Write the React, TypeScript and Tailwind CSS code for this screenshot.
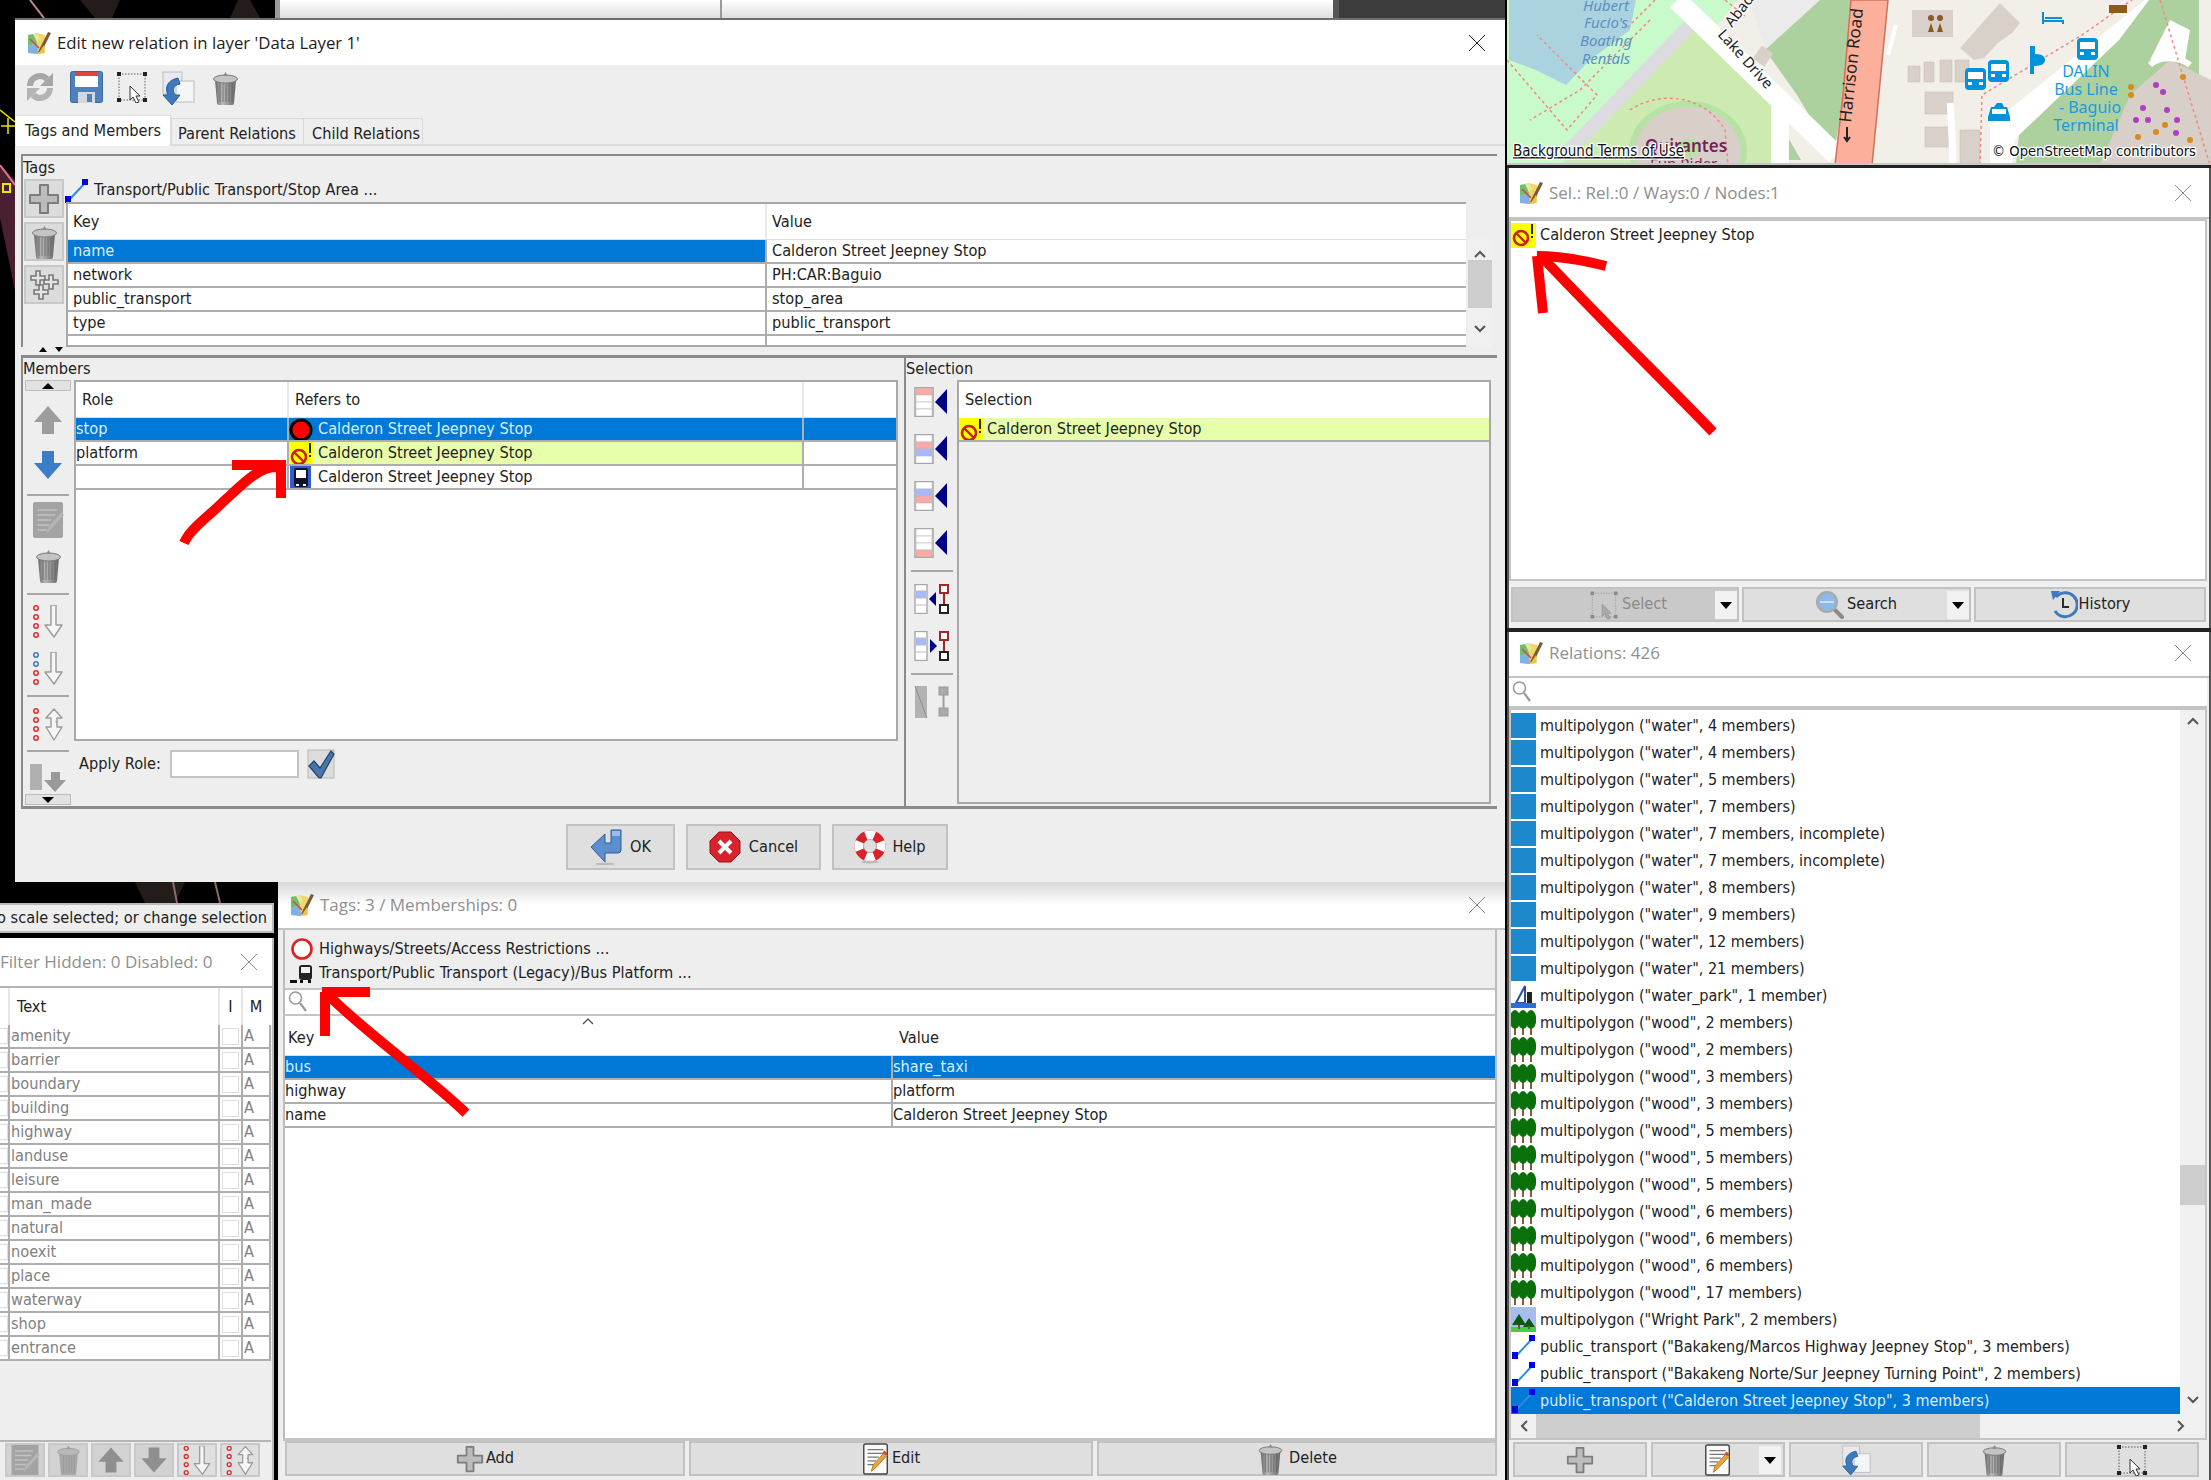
import React from "react";

const Sv = ({ w = 24, h = 24, children, vb }: { w?: number; h?: number; children: React.ReactNode; vb?: string }) => (
  <svg width={w} height={h} viewBox={vb ?? `0 0 ${w} ${h}`} className="shrink-0 block">{children}</svg>
);

const Logo = () => (
  <Sv w={25} h={24}>
    <path d="M1 4l9-2 8 2v18l-8 1-9-1z" fill="#f3d66a" />
    <path d="M1 4l6-1 3 9-9 3z" fill="#6fbf73" />
    <path d="M1 15l9-3 1 11-10-1z" fill="#7fb0e6" />
    <path d="M6 3l4-1 3 6-3 3z" fill="#e8e8a0" />
    <path d="M3 8l9 9" stroke="#d0503a" strokeWidth="1.6" />
    <path d="M11 21L21 1l3 1L14 22z" fill="#7a5a32" />
    <path d="M17 14v8l-6 1z" fill="#efc04e" />
  </Sv>
);
const Refresh = () => (
  <Sv w={30} h={32}>
    <path d="M5 15a10 10 0 0 1 17-7" fill="none" stroke="#a6a6a6" strokeWidth="6" />
    <path d="M28 2v13H15z" fill="#a6a6a6" />
    <path d="M25 17a10 10 0 0 1-17 7" fill="none" stroke="#b4b4b4" strokeWidth="6" />
    <path d="M2 30V17h13z" fill="#b4b4b4" />
  </Sv>
);
const Floppy = () => (
  <Sv w={33} h={32}>
    <rect x="0.5" y="0.5" width="32" height="31" rx="2" fill="#4f81bd" stroke="#3a669c" />
    <rect x="5" y="1" width="23" height="15" fill="#fff" />
    <rect x="5" y="1" width="23" height="4" fill="#d9483b" />
    <rect x="8" y="21" width="17" height="11" fill="#d4d8de" />
    <rect x="17" y="23" width="5" height="8" fill="#4f81bd" />
  </Sv>
);
const SelectIco = ({ w = 32, gray = false }: { w?: number; gray?: boolean }) => {
  const c = gray ? "#8a8a8a" : "#222";
  return (
    <Sv w={w} h={32} vb="0 0 32 32">
      <rect x="3" y="3" width="26" height="26" fill="none" stroke={c} strokeWidth="1" strokeDasharray="1.5 1.5" opacity="0.7" />
      <rect x="1" y="1" width="4" height="4" fill={c} />
      <rect x="27" y="1" width="4" height="4" fill={c} />
      <rect x="1" y="27" width="4" height="4" fill={c} />
      <rect x="27" y="27" width="4" height="4" fill={c} />
      <path d="M14 15v14l3-3 3 6 3-1-3-6h4z" fill={gray ? "#aaa" : "#fff"} stroke={gray ? "#999" : "#333"} />
    </Sv>
  );
};
const CopyArrow = ({ s = 34 }: { s?: number }) => (
  <Sv w={s} h={s} vb="0 0 34 34">
    <rect x="2" y="1" width="19" height="22" fill="#e8eaee" stroke="#b9bcc2" />
    <rect x="15" y="10" width="18" height="21" fill="#f4f5f6" stroke="#b9bcc2" />
    <path d="M17 7C7 9 3 16 7 24L2 24L11 34L19 24L14 24C11 19 12 14 19 13Z" fill="#3d79bd" stroke="#2c5e9a" />
  </Sv>
);
const Trash = ({ w = 27, h = 34, gray = false }: { w?: number; h?: number; gray?: boolean }) => (
  <Sv w={w} h={h} vb="0 0 27 34">
    <defs>
      <linearGradient id="trashg" x1="0" x2="1" y1="0" y2="0">
        <stop offset="0" stopColor="#666" />
        <stop offset="0.35" stopColor="#b8b8b8" />
        <stop offset="1" stopColor="#666" />
      </linearGradient>
    </defs>
    <path d="M3 9h21l-2 23a2 2 0 0 1-2 2H7a2 2 0 0 1-2-2z" fill={gray ? "#a8a8a8" : "url(#trashg)"} />
    {[8, 11, 14, 17, 20].map((x) => (
      <path key={x} d={`M${x} 12v19`} stroke={gray ? "#939393" : "#5e5e5e"} strokeWidth="1" opacity="0.7" />
    ))}
    <ellipse cx="13.5" cy="8" rx="12" ry="4" fill={gray ? "#b8b8b8" : "#c4c4c4"} stroke={gray ? "#a0a0a0" : "#7a7a7a"} />
    <path d="M11 5l2.5-4 2.5 4z" fill={gray ? "#a0a0a0" : "#8e8e8e"} />
  </Sv>
);
const Plus = ({ s = 32 }: { s?: number }) => (
  <Sv w={s} h={s} vb="0 0 32 32">
    <path d="M12 2h8v10h10v8H20v10h-8V20H2v-8h10z" fill="#bcbcbc" stroke="#7c7c7c" strokeWidth="2" strokeLinejoin="round" />
  </Sv>
);
const MultiPlus = () => (
  <Sv w={32} h={32}>
    {[[10, 9], [23, 13], [13, 23]].map(([x, y], i) => (
      <path key={i} d={`M${x - 2} ${y - 7}h4v5h5v4h-5v5h-4v-5h-5v-4h5z`} fill="#e5e5e5" stroke="#777" strokeWidth="1.6" />
    ))}
  </Sv>
);
const RelIco = () => (
  <Sv w={24} h={24}>
    <path d="M4 21L20 4" stroke="#2b8de0" strokeWidth="2" />
    <rect x="0" y="17" width="6" height="7" fill="#0000e0" />
    <rect x="17" y="0" width="6" height="6" fill="#0000e0" />
  </Sv>
);
const NoEntry = () => (
  <Sv w={25} h={25}>
    <rect width="25" height="25" fill="#ffff00" />
    <circle cx="10" cy="15" r="7" fill="none" stroke="#cc1f00" strokeWidth="2.6" />
    <path d="M5 10l10 10" stroke="#cc1f00" strokeWidth="2.4" />
    <rect x="20" y="1" width="2" height="10" fill="#222" />
    <rect x="20" y="13" width="2" height="2" fill="#222" />
  </Sv>
);
const RedCircle = () => (
  <Sv w={24} h={24}>
    <circle cx="12" cy="12" r="10" fill="#ff0000" stroke="#000" strokeWidth="3" />
  </Sv>
);
const BusIco = () => (
  <Sv w={24} h={24}>
    <rect x="1" y="0" width="21" height="24" fill="#3358d8" />
    <rect x="5" y="2" width="14" height="19" rx="2" fill="#101428" />
    <rect x="7" y="4" width="10" height="8" fill="#fff" />
    <rect x="7" y="18" width="3" height="2" fill="#fff" />
    <rect x="14" y="18" width="3" height="2" fill="#fff" />
  </Sv>
);
const ArrowV = ({ up = false, color }: { up?: boolean; color: string }) => (
  <Sv w={32} h={30}>
    <path d={up ? "M16 1L30 17H22V29H10V17H2z" : "M10 1H22V13H30L16 29L2 13H10z"} fill={color} />
  </Sv>
);
const NoteGray = () => (
  <Sv w={32} h={36}>
    <rect x="1" y="0" width="30" height="36" rx="2" fill="#a3a3a3" />
    <path d="M5 8h20M5 13h18M5 18h14M5 23h12M5 28h10" stroke="#c2c2c2" strokeWidth="1.5" />
    <path d="M14 32l3-8 13-14 2 3-13 14z" fill="#b5b5b5" />
  </Sv>
);
const Note = ({ h = 32 }: { h?: number }) => (
  <Sv w={28} h={h} vb="0 0 28 34">
    <rect x="1" y="1" width="25" height="32" rx="2" fill="#fafafa" stroke="#444" strokeWidth="1.5" />
    <path d="M5 7h17M5 11h17M5 15h12M5 19h9M5 23h7" stroke="#777" strokeWidth="1.4" />
    <path d="M9 30l2-7 12-13 3 3-12 13z" fill="#e8a33a" stroke="#a36a1a" strokeWidth="0.8" />
    <path d="M21 10l2-2 3 3-2 2z" fill="#d04a3a" />
  </Sv>
);
const DotsArrow = ({ blue = false, both = false, s = 33 }: { blue?: boolean; both?: boolean; s?: number }) => (
  <Sv w={32} h={s} vb="0 0 32 33">
    {[3, 12, 21, 30].map((y, i) => (
      <circle key={y} cx="4" cy={y} r="2.2" fill="none" stroke={blue && i < 2 ? "#3d79bd" : "#e02b2b"} strokeWidth="1.5" />
    ))}
    {both ? (
      <path d="M22 1l8 9h-5v4h-1 1v5h5l-8 13-8-13h5v-5-4h-5z" fill="#f6f6f6" stroke="#9a9a9a" strokeWidth="1.4" strokeLinejoin="round" />
    ) : (
      <path d="M19 0h5v20h6l-8 12-9-12h6z" fill="#f6f6f6" stroke="#9a9a9a" strokeWidth="1.4" strokeLinejoin="round" />
    )}
  </Sv>
);
const SortDown = () => (
  <Sv w={36} h={28}>
    <rect x="0" y="0" width="12" height="26" fill="#b0b0b0" />
    <path d="M21 8h9v8h6L25 28 14 16h7z" fill="#999" />
  </Sv>
);
const TableArrow = ({ hi }: { hi: number[] }) => (
  <Sv w={36} h={30}>
    <rect x="1" y="0.5" width="18" height="29" fill="#fff" stroke="#a0a0a0" strokeWidth="1.4" />
    {[0, 1, 2, 3].map((i) => (
      <rect key={i} x="2" y={1 + i * 7} width="16" height="7" fill={hi[0] === i ? "#ffa8a8" : hi[1] === i ? "#a8b8ff" : "#fff"} stroke="#b8b8b8" strokeWidth="0.6" />
    ))}
    <path d="M33 2v25L21 15z" fill="#000086" />
  </Sv>
);
const TableNode = ({ right = false }: { right?: boolean }) => (
  <Sv w={36} h={30}>
    <rect x="1" y="0.5" width="12" height="29" fill="#fff" stroke="#a8a8a8" strokeWidth="1.4" />
    <rect x="2" y="7" width="10" height="7" fill="#a8b8ff" />
    <path d="M2 7h10M2 14h10M2 21h10" stroke="#bbb" />
    <path d={right ? "M16 8v14l7-7z" : "M22 8v14l-7-7z"} fill="#000086" />
    <rect x="26" y="1" width="8" height="8" fill="#fff" stroke="#a02828" strokeWidth="2" />
    <path d="M30 9v12" stroke="#a02828" strokeWidth="2" />
    <rect x="26" y="21" width="8" height="8" fill="#fff" stroke="#222" strokeWidth="2" />
  </Sv>
);
const TableOff = () => (
  <Sv w={36} h={32}>
    <path d="M1 0h12v32H1z" fill="#b2b2b2" />
    <path d="M1 0l12 32" stroke="#8f8f8f" />
    <rect x="25" y="1" width="9" height="8" fill="#aaa" stroke="#999" />
    <path d="M29.5 9v13" stroke="#a0a0a0" strokeWidth="2" />
    <rect x="25" y="22" width="9" height="8" fill="#aaa" stroke="#999" />
  </Sv>
);
const Check = () => (
  <Sv w={28} h={30}>
    <rect x="1" y="1" width="26" height="28" fill="#dcdcdc" stroke="#b8b8b8" />
    <path d="M2 17l5-5 6 7L24 2l3 3-13 24h-2z" fill="#4a75a8" stroke="#23426e" strokeWidth="1.2" />
  </Sv>
);
const OkIco = () => (
  <Sv w={34} h={36}>
    <path d="M31 1v20a3 3 0 0 1-3 3H15v9L1 18 15 5v9h6V1z" fill="#5b8fd0" stroke="#2f5f9e" />
    <rect x="22" y="2" width="8" height="5" fill="#9bbde6" />
    <ellipse cx="15" cy="35" rx="10" ry="1.5" fill="#bbb" />
  </Sv>
);
const CancelIco = () => (
  <Sv w={32} h={32}>
    <path d="M10 1h12l9 9v12l-9 9H10l-9-9V10z" fill="#d8232a" stroke="#9a1115" />
    <path d="M10 10l12 12M22 10L10 22" stroke="#fff" strokeWidth="4" />
  </Sv>
);
const HelpIco = () => (
  <Sv w={32} h={34}>
    <circle cx="16" cy="16" r="11" fill="none" stroke="#d8232a" strokeWidth="9" />
    <circle cx="16" cy="16" r="11" fill="none" stroke="#ffffff" strokeWidth="9" strokeDasharray="8.6 8.6" strokeDashoffset="4.3" />
    <circle cx="16" cy="16" r="6.5" fill="none" stroke="#9a9a9a" strokeWidth="0.6" />
    <ellipse cx="16" cy="32" rx="9" ry="1.5" fill="#bbb" />
  </Sv>
);
const SearchIco = () => (
  <Sv w={28} h={28}>
    <path d="M17 17l9 9" stroke="#8a8a8a" strokeWidth="4" strokeLinecap="round" />
    <circle cx="11" cy="11" r="10" fill="#8db8e8" stroke="#a8a8a8" strokeWidth="2" />
    <path d="M4 11h14" stroke="#c9e0f8" strokeWidth="2" />
  </Sv>
);
const Glass = () => (
  <Sv w={20} h={24}>
    <circle cx="7.5" cy="8" r="6" fill="none" stroke="#9a9a9a" strokeWidth="1.6" />
    <path d="M12 13l6 8" stroke="#9a9a9a" strokeWidth="2.2" />
  </Sv>
);
const HistoryIco = () => (
  <Sv w={28} h={30}>
    <path d="M6 7a12 12 0 1 1-1 14" fill="none" stroke="#3d79bd" strokeWidth="3" />
    <path d="M1 1l9 0-7 9z" fill="#3d79bd" />
    <path d="M13 8v9h6" fill="none" stroke="#2b2b2b" strokeWidth="2" />
  </Sv>
);
const Caret = () => <span className="inline-block w-0 h-0 border-l-[6px] border-r-[6px] border-t-[7px] border-l-transparent border-r-transparent border-t-black" />;
const Tree = () => (
  <Sv w={25} h={25}>
    {[4, 12, 20].map((x) => (
      <g key={x}>
        <rect x={x - 1} y="18" width="2" height="7" fill="#8a5a3a" />
        <ellipse cx={x} cy="9.5" rx="5.2" ry="9.5" fill="#0a700a" />
      </g>
    ))}
  </Sv>
);
const WaterPark = () => (
  <Sv w={25} h={25}>
    <rect width="25" height="25" fill="#fff" />
    <path d="M5 20L14 3v17z" fill="#fff" stroke="#2b4ca0" strokeWidth="2" />
    <rect x="16" y="9" width="5" height="11" fill="#222" />
    <rect x="0" y="20" width="25" height="5" fill="#2b6ce0" />
  </Sv>
);
const Park = () => (
  <Sv w={25} h={25}>
    <rect width="25" height="25" fill="#a8bcf0" />
    <rect y="20" width="25" height="5" fill="#40d040" />
    <path d="M8 7l7 11H1zM18 11l6 9H12z" fill="#0a5a0a" />
    <rect x="7" y="18" width="2" height="4" fill="#8a4a2a" />
    <rect x="17" y="19" width="2" height="3" fill="#8a4a2a" />
  </Sv>
);
const Water = () => <div className="w-[25px] h-[25px] bg-[#1e88cc] shrink-0" />;
const CloseX = ({ dim = false }: { dim?: boolean }) => (
  <Sv w={18} h={18}>
    <path d="M1 1l16 16M17 1L1 17" stroke={dim ? "#8a8a8a" : "#222"} strokeWidth="1" />
  </Sv>
);

const Sep = () => <div className="h-[2px] w-[42px] bg-[#a8a8a8] shrink-0" />;

const Tbtn = ({ children }: { children: React.ReactNode }) => (
  <div className="h-[39px] w-[40px] mb-[4px] bg-[#dcdcdc] border-2 border-[#c8c8c8] flex items-center justify-center shrink-0">{children}</div>
);

const TagRow = ({ k, v, sel }: { k: string; v: string; sel?: boolean }) => (
  <div className={`flex h-[24px] border-b-2 border-[#aeaeae] text-[16.2px] leading-[22px] shrink-0 ${sel ? "bg-[#0078d7]" : "bg-white"}`}>
    <div className={`w-[699px] pl-[5px] border-r-2 border-[#aeaeae] ${sel ? "text-[#dbeeff]" : "text-[#222]"}`}>{k}</div>
    <div className="flex-1 pl-[5px] bg-white text-[#222]">{v}</div>
  </div>
);

const MemberRow = ({ role, ico, sel, warn }: { role: string; ico: React.ReactNode; sel?: boolean; warn?: boolean }) => {
  const bg = sel ? "bg-[#0078d7]" : "bg-white";
  const rightBg = sel ? "bg-[#0078d7] text-[#dbeeff]" : warn ? "bg-[#e8ffaa] text-[#222]" : "bg-white text-[#222]";
  return (
    <div className={`flex h-[24px] border-b-2 border-[#aeaeae] text-[16.2px] leading-[22px] shrink-0 ${bg}`}>
      <div className={`w-[213px] border-r-2 border-[#aeaeae] ${sel ? "text-[#dbeeff]" : "text-[#222]"}`}>{role}</div>
      <div className={`w-[515px] flex border-r-2 border-[#aeaeae] ${rightBg}`}>
        <div className="w-[24px] h-[22px] overflow-hidden shrink-0">{ico}</div>
        <span className="ml-[5px]">Calderon Street Jeepney Stop</span>
      </div>
      <div className="flex-1" />
    </div>
  );
};

const ActBtn = ({ w, children, cls = "" }: { w: string; children: React.ReactNode; cls?: string }) => (
  <div className={`${w} h-[35px] bg-[#dfdfdf] border-2 border-[#c2c2c2] flex items-center justify-center gap-[2px] text-[16.2px] text-[#222] shrink-0 ${cls}`}>{children}</div>
);

const Dialog = () => (
  <div className="flex-1 bg-[#eeeeee] flex flex-col min-w-0">
    <div className="h-[47px] bg-white flex items-center pl-[12px] pr-[19px] border-t-2 border-[#6f6f6f] shrink-0">
      <Logo />
      <span className="ml-[5px] text-[16.8px] text-[#1d1d1d] font-['Open_Sans',sans-serif]">Edit new relation in layer 'Data Layer 1'</span>
      <div className="ml-auto"><CloseX /></div>
    </div>
    <div className="h-[51px] flex items-start pt-[6px] pl-[10px] gap-[13px] shrink-0">
      <Refresh />
      <div className="ml-[2px]"><Floppy /></div>
      <SelectIco />
      <CopyArrow />
      <div className="ml-[4px]"><Trash /></div>
    </div>
    <div className="h-[30px] flex items-end pl-[1px] shrink-0 border-b-2 border-[#dcdcdc] relative text-[16.2px] text-[#222]">
      <div className="w-[155px] h-[31px] bg-white border-t border-r border-[#ddd] pl-[9px] leading-[30px] mb-[-2px]">Tags and Members</div>
      <div className="w-[133px] h-[26px] border border-[#d8d8d8] border-b-0 pl-[6px] leading-[29px]">Parent Relations</div>
      <div className="w-[119px] h-[26px] border-r border-t border-[#d8d8d8] pl-[8px] leading-[29px]">Child Relations</div>
    </div>
    <div className="h-[8px] shrink-0" />
    {/* Tags */}
    <div className="h-[193px] mx-[6px] mr-[8px] border-t-2 border-l-2 border-[#8a8a8a] flex flex-col shrink-0">
      <div className="h-[23px] text-[16.2px] leading-[24px] text-[#222] shrink-0">Tags</div>
      <div className="flex flex-1 min-h-0">
        <div className="w-[43px] pl-[1px] flex flex-col shrink-0">
          <Tbtn><Plus /></Tbtn>
          <Tbtn><Trash /></Tbtn>
          <Tbtn><MultiPlus /></Tbtn>
        </div>
        <div className="flex flex-col flex-1 min-w-0">
          <div className="h-[23px] flex items-center text-[16.2px] text-[#222] shrink-0 -ml-[1px]">
            <RelIco />
            <span className="ml-[5px]">Transport/Public Transport/Stop Area ...</span>
          </div>
          <div className="flex flex-1 min-h-0">
            <div className="w-[1400px] border-t-2 border-l-2 border-b-2 border-[#a8a8a8] bg-white flex flex-col shrink-0">
              <div className="h-[36px] flex text-[16.2px] leading-[36px] text-[#222] shrink-0 border-b border-[#ddd]">
                <div className="w-[699px] pl-[5px] border-r-2 border-[#e8e8e8]">Key</div>
                <div className="pl-[5px]">Value</div>
              </div>
              <TagRow k="name" v="Calderon Street Jeepney Stop" sel />
              <TagRow k="network" v="PH:CAR:Baguio" />
              <TagRow k="public_transport" v="stop_area" />
              <TagRow k="type" v="public_transport" />
              <div className="flex flex-1">
                <div className="w-[699px] border-r-2 border-[#aeaeae]" />
              </div>
            </div>
            <div className="w-[24px] ml-[2px] flex flex-col items-center shrink-0">
              <div className="h-[37px] shrink-0" />
              <div className="flex-1 w-full bg-[#f0f0f0] flex flex-col items-center pt-[11px]">
                <Sv w={12} h={8}><path d="M1 7l5-5 5 5" fill="none" stroke="#555" strokeWidth="2" /></Sv>
                <div className="w-[24px] h-[48px] bg-[#cdcdcd] mt-[2px]" />
                <div className="mt-[17px]"><Sv w={12} h={8}><path d="M1 1l5 5 5-5" fill="none" stroke="#555" strokeWidth="2" /></Sv></div>
              </div>
            </div>
          </div>
        </div>
      </div>
    </div>
    <div className="h-[8px] pl-[24px] flex gap-[8px] items-start shrink-0 relative">
      <span className="w-0 h-0 border-l-[4px] border-r-[4px] border-b-[5px] border-l-transparent border-r-transparent border-b-black" />
      <span className="w-0 h-0 border-l-[4px] border-r-[4px] border-t-[5px] border-l-transparent border-r-transparent border-t-black" />
    </div>
    {/* Members + selection */}
    <div className="h-[454px] mx-[6px] mr-[8px] border-y-[3px] border-l-2 border-[#8a8a8a] flex shrink-0">
      <div className="w-[875px] flex flex-col shrink-0">
        <div className="h-[22px] text-[16.2px] leading-[22px] text-[#222] shrink-0">Members</div>
        <div className="flex flex-1 min-h-0">
          <div className="w-[51px] pl-[1px] flex flex-col items-center shrink-0 pr-[2px]">
            <div className="h-[11px] w-[46px] bg-[#e2e2e2] border border-[#bdbdbd] flex items-center justify-center shrink-0">
              <span className="w-0 h-0 border-l-[6px] border-r-[6px] border-b-[6px] border-l-transparent border-r-transparent border-b-black" />
            </div>
            <div className="mt-[14px]"><ArrowV up color="#9c9c9c" /></div>
            <div className="mt-[15px]"><ArrowV color="#3c7cc8" /></div>
            <div className="mt-[14px]"><Sep /></div>
            <div className="mt-[6px]"><NoteGray /></div>
            <div className="mt-[11px]"><Trash /></div>
            <div className="mt-[10px]"><Sep /></div>
            <div className="mt-[10px]"><DotsArrow /></div>
            <div className="mt-[14px]"><DotsArrow blue /></div>
            <div className="mt-[10px]"><Sep /></div>
            <div className="mt-[11px]"><DotsArrow both /></div>
            <div className="mt-[9px]"><Sep /></div>
            <div className="mt-[12px]"><SortDown /></div>
            <div className="h-[11px] w-[46px] bg-[#e2e2e2] border border-[#bdbdbd] flex items-center justify-center shrink-0 mt-[2px]">
              <span className="w-0 h-0 border-l-[6px] border-r-[6px] border-t-[6px] border-l-transparent border-r-transparent border-t-black" />
            </div>
          </div>
          <div className="flex flex-col flex-1 min-w-0">
            <div className="h-[361px] border-2 border-[#a8a8a8] border-r-2 bg-white flex flex-col shrink-0">
              <div className="h-[36px] flex text-[16.2px] leading-[36px] text-[#222] shrink-0 border-b border-[#ddd]">
                <div className="w-[213px] pl-[6px] border-r-2 border-[#e8e8e8]">Role</div>
                <div className="w-[515px] pl-[6px] border-r-2 border-[#e8e8e8]">Refers to</div>
              </div>
              <MemberRow role="stop" ico={<RedCircle />} sel />
              <MemberRow role="platform" ico={<NoEntry />} warn />
              <MemberRow role="" ico={<BusIco />} />
            </div>
            <div className="h-[28px] mt-[9px] flex items-center pl-[5px] text-[16.2px] text-[#222]">
              <span>Apply Role:</span>
              <div className="w-[129px] h-[28px] ml-[9px] bg-white border-2 border-[#c4c4c4]" />
              <div className="ml-[8px]"><Check /></div>
            </div>
          </div>
        </div>
      </div>
      <div className="w-[8px] shrink-0 border-r-2 border-[#8a8a8a]" />
      <div className="flex-1 flex flex-col min-w-0">
        <div className="h-[22px] text-[16.2px] leading-[22px] text-[#222] shrink-0">Selection</div>
        <div className="flex flex-1 min-h-0 pb-[2px]">
          <div className="w-[51px] flex flex-col items-center shrink-0 pt-[7px]">
            <TableArrow hi={[0, -1]} />
            <div className="mt-[17px]"><TableArrow hi={[1, 2]} /></div>
            <div className="mt-[17px]"><TableArrow hi={[2, 1]} /></div>
            <div className="mt-[17px]"><TableArrow hi={[3, -1]} /></div>
            <div className="mt-[12px]"><Sep /></div>
            <div className="mt-[12px]"><TableNode /></div>
            <div className="mt-[17px]"><TableNode right /></div>
            <div className="mt-[12px]"><Sep /></div>
            <div className="mt-[11px]"><TableOff /></div>
          </div>
          <div className="flex-1 border-2 border-[#a8a8a8] bg-[#eeeeee] flex flex-col min-w-0 mr-[6px]">
            <div className="h-[36px] bg-white pl-[6px] text-[16.2px] leading-[36px] text-[#222] shrink-0">Selection</div>
            <div className="h-[24px] bg-[#e8ffaa] border-b-2 border-[#aeaeae] flex text-[16.2px] leading-[22px] text-[#222] shrink-0">
              <div className="w-[24px] h-[22px] overflow-hidden"><NoEntry /></div>
              <span className="ml-[4px]">Calderon Street Jeepney Stop</span>
            </div>
          </div>
        </div>
      </div>
    </div>
    <div className="h-[61px] flex items-start pt-[15px] pl-[551px] gap-[11px] text-[16.2px] text-[#222] shrink-0">
      <ActBtn w="w-[109px] !h-[46px]"><div className="flex items-center gap-[6px]"><OkIco /><span>OK</span></div></ActBtn>
      <ActBtn w="w-[135px] !h-[46px]"><div className="flex items-center gap-[8px]"><CancelIco /><span>Cancel</span></div></ActBtn>
      <ActBtn w="w-[116px] !h-[46px]"><div className="flex items-center gap-[6px]"><HelpIco /><span>Help</span></div></ActBtn>
    </div>
  </div>
);

const filterRows = ["amenity", "barrier", "boundary", "building", "highway", "landuse", "leisure", "man_made", "natural", "noexit", "place", "waterway", "shop", "entrance"];

const FilterPanel = () => (
  <div className="w-[275px] flex flex-col shrink-0">
    <div className="h-[21px] bg-black overflow-hidden shrink-0">
      <svg width="275" height="21" className="block">
        <path d="M135 0h50l-10 21h-30z" fill="#241b1b" />
        <path d="M173 0l4 21M215 0l5 21" stroke="#8a6a6a" strokeWidth="2" />
      </svg>
    </div>
    <div className="h-[30px] bg-[#eeeeee] border-y-2 border-r-2 border-[#bbbbbb] text-[16.2px] leading-[25px] text-[#222] overflow-hidden whitespace-nowrap flex justify-end pr-[5px] mr-[1px] shrink-0">
      to scale selected; or change selection
    </div>
    <div className="h-[5px] bg-black shrink-0" />
    <div className="flex-1 bg-[#eeeeee] flex flex-col min-h-0 border-r-2 border-[#bbbbbb] mr-[1px]">
      <div className="h-[50px] bg-white flex items-center pr-[14px] border-b-2 border-[#b5b5b5] shrink-0 text-[17px] text-[#8f8f8f] font-['Open_Sans',sans-serif] whitespace-nowrap">
        <span>Filter Hidden: 0 Disabled: 0</span>
        <div className="ml-auto"><CloseX dim /></div>
      </div>
      <div className="flex-1 flex flex-col min-h-0 text-[16.2px]">
        <div className="h-[37px] bg-white flex leading-[37px] text-[#222] shrink-0">
          <div className="w-[10px] border-r-2 border-[#e6e6e6]" />
          <div className="w-[210px] pl-[7px] border-r-2 border-[#e6e6e6]">Text</div>
          <div className="w-[23px] text-center border-r-2 border-[#e6e6e6]">I</div>
          <div className="w-[26px] text-center">M</div>
        </div>
        {filterRows.map((r) => (
          <div key={r} className="h-[24px] bg-white flex border-b-2 border-[#aeaeae] leading-[22px] text-[#808080] shrink-0 w-[271px] border-r-2">
            <div className="w-[10px] border-r-2 border-[#aeaeae] flex items-center"><div className="w-[8px] h-[16px] border border-[#ddd] border-l-0" /></div>
            <div className="w-[210px] pl-[1px] border-r-2 border-[#aeaeae]">{r}</div>
            <div className="w-[23px] border-r-2 border-[#aeaeae] flex items-center justify-center"><div className="w-[17px] h-[17px] border border-[#ddd]" /></div>
            <div className="pl-[1px]">A</div>
          </div>
        ))}
        <div className="flex-1" />
        <div className="h-[2px] bg-[#b5b5b5] shrink-0 w-[271px]" />
        <div className="h-[38px] flex pl-[8px] gap-[3px] items-start pt-[1px] shrink-0 -ml-[3px]">
          {[<NoteGray key="a" />, <Trash key="b" gray />, <ArrowV key="c" up color="#8f8f8f" />, <ArrowV key="d" color="#8f8f8f" />, <DotsArrow key="e" />, <DotsArrow key="f" both />].map((x, i) => (
            <div key={i} className={`w-[40px] h-[34px] border-2 border-[#c8c8c8] flex items-center justify-center overflow-hidden shrink-0 ${i < 4 ? "bg-[#d2d2d2]" : "bg-[#dfdfdf]"}`}>
              <div className="scale-90">{x}</div>
            </div>
          ))}
        </div>
      </div>
    </div>
  </div>
);

const TagRow2 = ({ k, v, sel }: { k: string; v: string; sel?: boolean }) => (
  <div className={`flex h-[24px] border-b-2 border-[#aeaeae] text-[16.2px] leading-[22px] shrink-0 ${sel ? "bg-[#0078d7] text-[#dbeeff]" : "bg-white text-[#222]"}`}>
    <div className="w-[608px] border-r-2 border-[#aeaeae]">{k}</div>
    <div className="flex-1">{v}</div>
  </div>
);

const TagsPanel = () => (
  <div className="flex-1 ml-[3px] flex flex-col min-w-0 bg-[#eeeeee]">
    <div className="h-[48px] bg-gradient-to-b from-[#d8d8d8] via-white to-white flex items-center pl-[12px] pr-[19px] text-[17px] text-[#8f8f8f] font-['Open_Sans',sans-serif] shrink-0 border-b-2 border-[#c4c4c4]">
      <Logo />
      <span className="ml-[5px]">Tags: 3 / Memberships: 0</span>
      <div className="ml-auto"><CloseX dim /></div>
    </div>
    <div className="flex-1 flex flex-col min-h-0 mx-[5px] mr-[8px] border-x-2 border-[#bdbdbd]">
      <div className="h-[58px] flex flex-col pl-[5px] text-[16.2px] text-[#222] shrink-0 pt-[7px]">
        <div className="h-[24px] flex items-center">
          <Sv w={24} h={24}><circle cx="12" cy="12" r="9.5" fill="#fff" stroke="#dd2222" strokeWidth="2.6" /></Sv>
          <span className="ml-[5px]">Highways/Streets/Access Restrictions ...</span>
        </div>
        <div className="h-[24px] flex items-center">
          <Sv w={24} h={24}>
            <rect x="9" y="4" width="13" height="15" rx="3" fill="#222" />
            <rect x="11" y="6" width="9" height="6" fill="#f0f0f0" />
            <rect x="0" y="19" width="7" height="3" fill="#111" />
            <rect x="10" y="19" width="3" height="3" fill="#111" />
            <rect x="18" y="19" width="3" height="3" fill="#111" />
          </Sv>
          <span className="ml-[5px]">Transport/Public Transport (Legacy)/Bus Platform ...</span>
        </div>
      </div>
      <div className="h-[28px] bg-white border-y-2 border-[#c4c4c4] pl-[3px] flex items-center shrink-0"><Glass /></div>
      <div className="flex-1 bg-white flex flex-col min-h-0">
        <div className="h-[40px] flex text-[16.2px] text-[#222] shrink-0 border-b border-[#ddd]">
          <div className="w-[608px] flex items-end pb-[5px] pl-[3px] relative">
            <span>Key</span>
            <div className="absolute left-[297px] top-[2px]">
              <Sv w={12} h={7}><path d="M1 6l5-5 5 5" fill="none" stroke="#555" strokeWidth="1.4" /></Sv>
            </div>
          </div>
          <div className="flex items-end pb-[5px] pl-[6px]">Value</div>
        </div>
        <TagRow2 k="bus" v="share_taxi" sel />
        <TagRow2 k="highway" v="platform" />
        <TagRow2 k="name" v="Calderon Street Jeepney Stop" />
        <div className="flex-1" />
      </div>
      <div className="h-[3px] bg-[#c4c4c4] shrink-0" />
    </div>
    <div className="h-[39px] flex items-start pl-[7px] pr-[8px] gap-[4px] shrink-0">
      <ActBtn w="w-[400px]"><Plus s={28} /><span>Add</span></ActBtn>
      <ActBtn w="w-[404px]"><Note /><span>Edit</span></ActBtn>
      <ActBtn w="flex-1"><Trash h={32} /><span className="ml-[3px]">Delete</span></ActBtn>
    </div>
  </div>
);

const MapPic = () => (
  <svg width="704" height="165" viewBox="1507 0 704 165" className="block shrink-0">
    <rect x="1507" y="0" width="704" height="165" fill="#f2efe9" />
    <path d="M1507 0h230l-60 80-100 85h-70z" fill="#c8facc" />
    <path d="M1509 0h127l-6 30-40 30-24 25-30-15-27-10z" fill="#aad3df" />
    <path d="M1697 25l74 70v70h-210z" fill="#cdebb0" />
    <ellipse cx="1688" cy="152" rx="56" ry="48" fill="#d8d0c8" stroke="#b5e3a4" strokeWidth="6" />
    <ellipse cx="1688" cy="148" rx="12" ry="9" fill="#b5e3a4" />
    <path d="M1749 0h70l-40 45-14 3z" fill="#ebebeb" />
    <path d="M1765 50l55-50h38l-20 130-5 25-36-60z" fill="#add19e" />
    <path d="M1771 108l30 52h-30z" fill="#add19e" />
    <path d="M1563 157L1697 18" stroke="#dcdce0" strokeWidth="14" />
    <path d="M1677 0L1836 155" stroke="#fff" strokeWidth="20" />
    <path d="M1780 95V165" stroke="#fff" strokeWidth="18" />
    <rect x="1756" y="48" width="14" height="16" fill="#d9d0c9" transform="rotate(35 1763 56)" />
    <path d="M1851 0h37l-16 165h-37l8-70z" fill="#fcb09c" stroke="#d0705c" strokeWidth="1.5" />
    <path d="M1912 10h41v27h-41z" fill="#d9d0c9" />
    <path d="M1990 165L1990 125L2145 0h30L2015 140L2012 165z" fill="#fff" />
    <path d="M2016 165l3-30 100-95 30-40 50 0v165z" fill="#add19e" />
    <path d="M2100 165l30-70 40-35 41 20v85z" fill="#d8cfc8" />
    <path d="M2150 60l20-40 20 10-5 30z" fill="#fff" />
    <path d="M2150 65c10-10 30-8 40 0" stroke="#fff" strokeWidth="6" fill="none" />
    {[[1925, 92, 28, 22], [1925, 127, 28, 20], [1960, 130, 20, 35], [1908, 66, 12, 16], [1924, 62, 10, 20], [1940, 60, 12, 22], [1955, 60, 14, 22]].map(([x, y, w, h], i) => (
      <rect key={i} x={x} y={y} width={w} height={h} fill="#d9d0c9" stroke="#c4b8ae" strokeWidth="0.5" />
    ))}
    <path d="M1960 48l40-45 20 20-8 10-14 10-14 15-10 2z" fill="#d9d0c9" />
    <path d="M1950 103c2 20 2 40 3 62" stroke="#fff" strokeWidth="7" fill="none" />
    <path d="M1888 55l8-30" stroke="#fff" strokeWidth="4" />
    <g stroke="#f08a80" strokeWidth="1.5" strokeDasharray="3 3" fill="none">
      <path d="M1507 60l60 70 30-35-60-60" />
      <path d="M1650 20l-70 70 -50 30" />
      <path d="M1630 110c30-20 75-15 95 20l3 35" />
      <path d="M1980 165l2-70 100-60 50-35" />
      <path d="M2160 0l50 165" />
      <path d="M1655 0l-30 30" />
      <path d="M1725 0l20 16" />
    </g>
    <g fill="#0092da">
      {[[2077, 38], [1988, 60], [1965, 68]].map(([x, y], i) => (
        <g key={i}>
          <rect x={x} y={y} width="21" height="22" rx="4" />
          <rect x={x + 3} y={y + 4} width="15" height="7" fill="#fff" />
          <rect x={x + 3} y={y + 14} width="4" height="3" fill="#fff" />
          <rect x={x + 14} y={y + 14} width="4" height="3" fill="#fff" />
        </g>
      ))}
      <path d="M1997 103h5l2 4h3l3 10v4h-22v-4l3-10h3z" />
      <rect x="1992" y="109" width="14" height="5" fill="#fff" />
      <path d="M2030 46h5v8c8 0 10 3 10 6s-3 6-10 6h-1v8h-4z" />
      <path d="M2043 12v12M2043 21h20v3M2045 18h17" stroke="#0092da" strokeWidth="2" fill="none" />
    </g>
    <g fill="#1a9ae0" fontSize="16" fontFamily="Noto Sans, sans-serif" textAnchor="middle">
      <text x="2086" y="77">DALIN</text>
      <text x="2086" y="95">Bus Line</text>
      <text x="2090" y="113">- Baguio</text>
      <text x="2086" y="131">Terminal</text>
    </g>
    <g fill="#5d8fc2" fontSize="15" fontStyle="italic" fontFamily="Noto Sans, sans-serif" textAnchor="middle">
      <text x="1606" y="11">Hubert</text>
      <text x="1606" y="28">Fucio's</text>
      <text x="1606" y="46">Boating</text>
      <text x="1606" y="64">Rentals</text>
    </g>
    <g fill="#222" fontSize="15" fontFamily="Noto Sans, sans-serif" stroke="#fff" strokeWidth="2" paintOrder="stroke">
      <text transform="translate(1732 28) rotate(-52)">Abad</text>
      <text transform="translate(1717 35) rotate(48)">Lake Drive</text>
      <text transform="translate(1851 123) rotate(-84)" stroke="none" fontSize="17">Harrison Road</text>
    </g>
    <path d="M1847 127v14M1844 137l3 4 3-4" stroke="#222" strokeWidth="2" fill="none" />
    <text x="1645" y="152" fontSize="17" fontFamily="Noto Sans, sans-serif" fontWeight="600" fill="#7b1e5b">Quirantes</text>
    <text x="1650" y="169" fontSize="15" fontFamily="Noto Sans, sans-serif" fill="#7b1e5b">Fun Rider</text>
    <g fill="#8a5a1e">
      <circle cx="1931" cy="18" r="3" />
      <circle cx="1940" cy="18" r="3" />
      <path d="M1928 32l3-9 3 9zM1937 32l3-9 3 9z" />
      <rect x="2109" y="5" width="18" height="8" />
    </g>
    {[[2156, 85, "#b040c0"], [2163, 92, "#b040c0"], [2143, 108, "#b040c0"], [2167, 110, "#b040c0"], [2136, 120, "#b040c0"], [2148, 120, "#b040c0"], [2131, 87, "#d88a1e"], [2131, 95, "#d88a1e"], [2165, 125, "#d88a1e"], [2156, 132, "#d88a1e"], [2176, 133, "#b040c0"], [2138, 137, "#d88a1e"], [2190, 140, "#d88a1e"], [2183, 77, "#d88a1e"], [2177, 120, "#b040c0"]].map(([x, y, c], i) => (
      <circle key={i} cx={x as number} cy={y as number} r="3" fill={c as string} />
    ))}
    <g fill="#111" fontSize="15" fontFamily="DejaVu Sans Condensed, DejaVu Sans, sans-serif" stroke="#fff" strokeWidth="2.5" paintOrder="stroke">
      <text x="1513" y="156" textDecoration="underline">Background Terms of Use</text>
      <text x="1992" y="156" fontSize="14.6">© OpenStreetMap contributors</text>
    </g>
    <rect x="1507" y="163" width="704" height="2" fill="#c8c8c8" />
  </svg>
);

const rels: [string, string][] = [
  ['multipolygon ("water", 4 members)', "w"], ['multipolygon ("water", 4 members)', "w"], ['multipolygon ("water", 5 members)', "w"],
  ['multipolygon ("water", 7 members)', "w"], ['multipolygon ("water", 7 members, incomplete)', "w"], ['multipolygon ("water", 7 members, incomplete)', "w"],
  ['multipolygon ("water", 8 members)', "w"], ['multipolygon ("water", 9 members)', "w"], ['multipolygon ("water", 12 members)', "w"], ['multipolygon ("water", 21 members)', "w"],
  ['multipolygon ("water_park", 1 member)', "p"],
  ['multipolygon ("wood", 2 members)', "t"], ['multipolygon ("wood", 2 members)', "t"], ['multipolygon ("wood", 3 members)', "t"], ['multipolygon ("wood", 3 members)', "t"],
  ['multipolygon ("wood", 5 members)', "t"], ['multipolygon ("wood", 5 members)', "t"], ['multipolygon ("wood", 5 members)', "t"], ['multipolygon ("wood", 6 members)', "t"],
  ['multipolygon ("wood", 6 members)', "t"], ['multipolygon ("wood", 6 members)', "t"], ['multipolygon ("wood", 17 members)', "t"],
  ['multipolygon ("Wright Park", 2 members)', "k"],
  ['public_transport ("Bakakeng/Marcos Highway Jeepney Stop", 3 members)', "r"],
  ['public_transport ("Bakakeng Norte/Sur Jeepney Turning Point", 2 members)', "r"],
  ['public_transport ("Calderon Street Jeepney Stop", 3 members)', "s"],
];
const relIcon = (t: string) =>
  t === "w" ? <Water /> : t === "p" ? <WaterPark /> : t === "t" ? <Tree /> : t === "k" ? <Park /> : <div className="w-[25px] flex justify-center"><RelIco /></div>;

const RightCol = () => (
  <div className="w-[704px] ml-[2px] flex flex-col shrink-0">
    <MapPic />
    <div className="h-[3px] bg-[#222] shrink-0" />
    <div className="h-[460px] bg-[#f0f0f0] border-x-2 border-[#555] flex flex-col shrink-0">
      <div className="h-[51px] bg-white flex items-center pl-[10px] pr-[17px] text-[17px] text-[#8f8f8f] font-['Open_Sans',sans-serif] border-b-2 border-[#c4c4c4] shrink-0">
        <Logo /><span className="ml-[5px]">Sel.: Rel.:0 / Ways:0 / Nodes:1</span>
        <div className="ml-auto"><CloseX dim /></div>
      </div>
      <div className="h-[362px] mr-[2px] bg-white border-2 border-[#c4c4c4] pt-[2px] shrink-0">
        <div className="flex text-[16.2px] text-[#222] leading-[24px]">
          <NoEntry /><span className="ml-[4px]">Calderon Street Jeepney Stop</span>
        </div>
      </div>
      <div className="flex pl-[2px] gap-[3px] mt-[6px] shrink-0 pr-[3px] text-[16.2px]">
        <div className="w-[228px] h-[35px] bg-[#c9c9c9] border-2 border-[#c2c2c2] flex items-center text-[#8a8a8a] relative shrink-0">
          <div className="flex items-center gap-[2px] w-full pl-[75px]">
            <div className="scale-[0.9]"><SelectIco gray /></div><span>Select</span>
          </div>
          <div className="absolute right-[0px] top-[2px] w-[22px] h-[28px] bg-[#f2f2f2] flex items-center justify-center"><Caret /></div>
        </div>
        <div className="w-[229px] h-[35px] bg-[#dfdfdf] border-2 border-[#c2c2c2] flex items-center text-[#222] relative shrink-0">
          <div className="flex items-center gap-[3px] pl-[72px]"><SearchIco /><span>Search</span></div>
          <div className="absolute right-[0px] top-[2px] w-[22px] h-[28px] bg-[#f2f2f2] flex items-center justify-center"><Caret /></div>
        </div>
        <div className="flex-1 h-[35px] bg-[#dfdfdf] border-2 border-[#c2c2c2] flex items-center justify-center gap-[1px] text-[#222]">
          <HistoryIco /><span>History</span>
        </div>
      </div>
    </div>
    <div className="h-[4px] bg-[#222] shrink-0" />
    <div className="flex-1 bg-[#eeeeee] border-x-2 border-[#555] flex flex-col min-h-0">
      <div className="h-[46px] bg-white flex items-center pl-[10px] pr-[17px] pb-[2px] text-[17px] text-[#8f8f8f] font-['Open_Sans',sans-serif] border-b-2 border-[#c4c4c4] shrink-0">
        <Logo /><span className="ml-[5px]">Relations: 426</span>
        <div className="ml-auto"><CloseX dim /></div>
      </div>
      <div className="h-[30px] bg-white mr-[2px] border-b-2 border-[#c4c4c4] pl-[3px] flex items-center shrink-0"><Glass /></div>
      <div className="h-[732px] mr-[2px] bg-white border-2 border-[#c4c4c4] flex flex-col shrink-0">
        <div className="flex flex-1 min-h-0">
          <div className="flex-1 flex flex-col min-w-0 pt-[2px]">
            {rels.map(([t, ic], i) => {
              const sel = ic === "s";
              return (
                <div key={i} className={`h-[27px] flex items-center text-[16px] shrink-0 whitespace-nowrap ${sel ? "bg-[#0078d7] text-[#dbeeff]" : "text-[#222]"}`}>
                  {relIcon(ic)}
                  <span className="ml-[4px]">{t}</span>
                </div>
              );
            })}
          </div>
          <div className="w-[25px] bg-[#f0f0f0] flex flex-col items-center shrink-0 pt-[7px] pb-[10px]">
            <Sv w={12} h={8}><path d="M1 7l5-5 5 5" fill="none" stroke="#555" strokeWidth="2" /></Sv>
            <div className="w-full h-[40px] bg-[#cdcdcd] mt-[440px]" />
            <div className="mt-auto"><Sv w={12} h={8}><path d="M1 1l5 5 5-5" fill="none" stroke="#555" strokeWidth="2" /></Sv></div>
          </div>
        </div>
        <div className="h-[24px] bg-[#f0f0f0] flex items-center shrink-0">
          <div className="w-[25px] flex justify-center"><Sv w={8} h={12}><path d="M7 1L2 6l5 5" fill="none" stroke="#555" strokeWidth="2" /></Sv></div>
          <div className="w-[444px] h-[24px] bg-[#cdcdcd]" />
          <div className="ml-auto w-[48px] flex justify-center"><Sv w={8} h={12}><path d="M1 1l5 5-5 5" fill="none" stroke="#555" strokeWidth="2" /></Sv></div>
        </div>
      </div>
      <div className="flex pl-[4px] gap-[4px] mt-[2px] shrink-0">
        <ActBtn w="w-[134px]"><Plus s={28} /></ActBtn>
        <ActBtn w="w-[134px] relative"><Note /><div className="absolute right-[2px] top-[2px] w-[22px] h-[28px] bg-[#f2f2f2] flex items-center justify-center"><Caret /></div></ActBtn>
        <ActBtn w="w-[134px]"><CopyArrow s={30} /></ActBtn>
        <ActBtn w="w-[134px]"><Trash h={32} /></ActBtn>
        <ActBtn w="w-[134px]"><SelectIco /></ActBtn>
      </div>
    </div>
  </div>
);

const RedArrow = ({ d }: { d: string }) => (
  <svg width="2211" height="1480" className="absolute left-0 top-0 pointer-events-none">
    <path d={d} fill="none" stroke="#ff0000" strokeWidth="10" strokeLinejoin="miter" />
  </svg>
);

export default function App() {
  return (
    <div className="w-[2211px] h-[1480px] bg-black flex overflow-hidden relative font-['DejaVu_Sans_Condensed','DejaVu_Sans',sans-serif]">
      <div className="w-[1505px] flex flex-col shrink-0">
        <div className="h-[18px] flex shrink-0 overflow-hidden">
          <div className="w-[275px] bg-black shrink-0">
            <svg width="275" height="18" className="block">
              <path d="M30 0l18 18M80 0h40l-8 18H95zM250 0h-12l-8 18h30z" fill="#241b1b" />
              <path d="M30 0l14 18" stroke="#c08a8a" strokeWidth="2" />
            </svg>
          </div>
          <div className="w-[447px] bg-gradient-to-b from-white to-[#dfdfdf] border-x-[5px] border-[#9a9a9a] border-r-2 shrink-0" />
          <div className="flex-1 bg-gradient-to-b from-white to-[#dfdfdf] border-r-[6px] border-[#555]" />
          <div className="w-[166px] bg-[#3c3c3c] shrink-0" />
        </div>
        <div className="h-[864px] flex shrink-0">
          <div className="w-[15px] bg-black shrink-0">
            <svg width="15" height="864" className="block">
              <path d="M0 147l15 15v110L0 200z" fill="#4a2030" />
              <path d="M0 147l15 20" stroke="#e0709a" strokeWidth="2" />
              <path d="M0 92l15 12M8 100v16M1 108h14" stroke="#e8e800" strokeWidth="1.5" />
              <rect x="3" y="166" width="7" height="8" fill="none" stroke="#e8e800" strokeWidth="2" />
            </svg>
          </div>
          <Dialog />
        </div>
        <div className="flex-1 flex min-h-0">
          <FilterPanel />
          <TagsPanel />
        </div>
      </div>
      <RightCol />
      <RedArrow d="M184 543c6-14 24-26 40-42 18-16 34-34 52-34M232 465h54M281 462v36" />
      <RedArrow d="M1713 432c-50-52-100-100-172-176M1537 256c25 0 45 4 69 10M1537 256l6 57" />
      <RedArrow d="M466 1113c-40-38-100-80-140-120M322 992h48M325 992v44" />
    </div>
  );
}
